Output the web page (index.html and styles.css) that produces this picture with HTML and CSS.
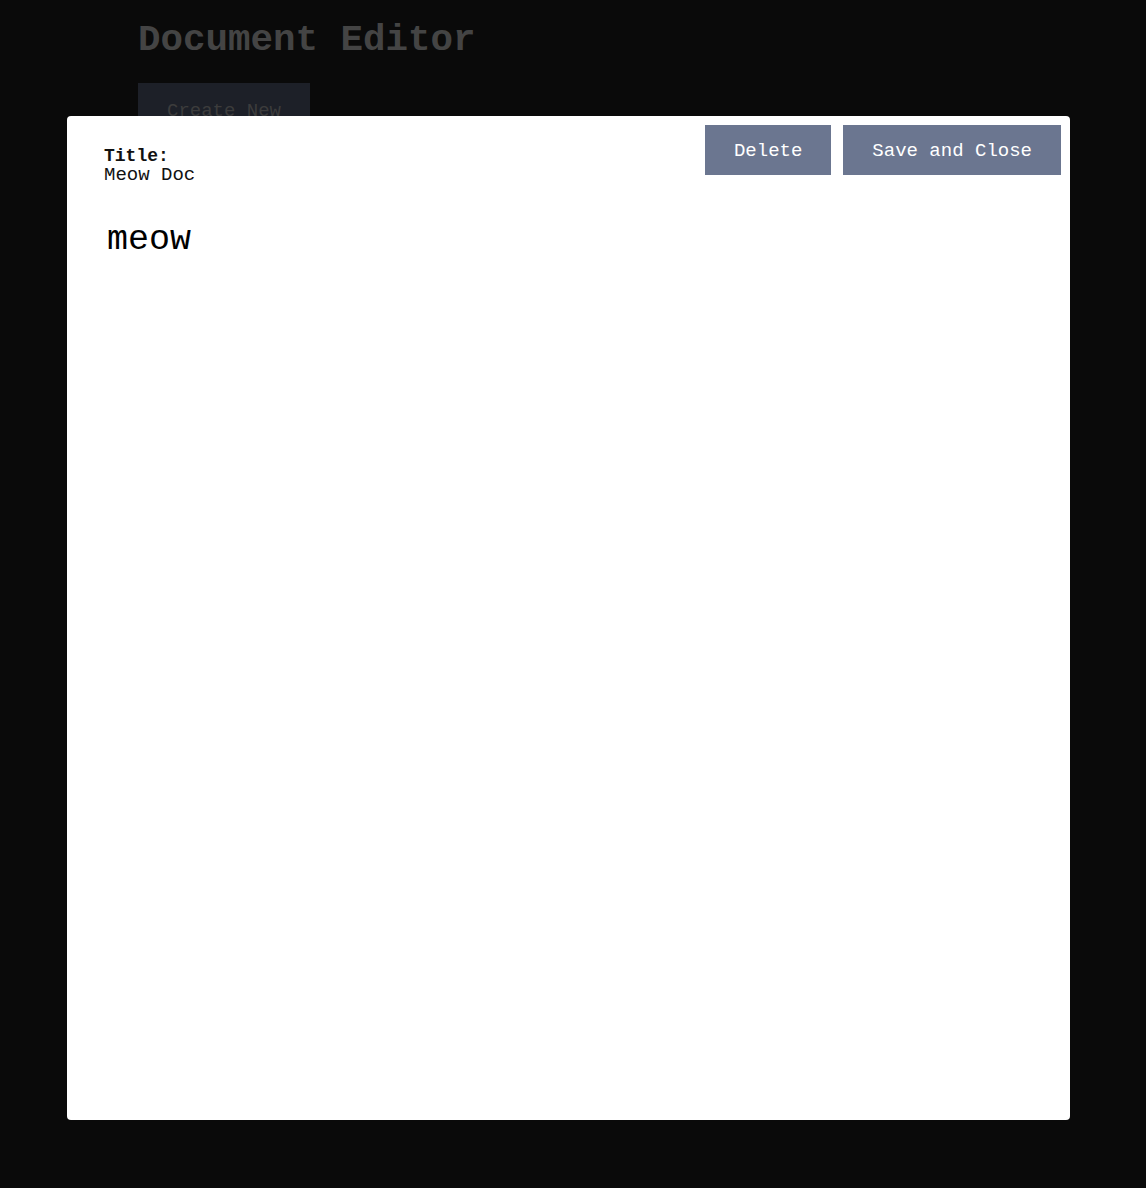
FILE: index.html
```html
<!DOCTYPE html>
<html>
<head>
<meta charset="utf-8">
<link rel="stylesheet" href="styles.css">
</head>
<body>
<div class="page">
  <h1 class="heading">Document Editor</h1>
  <button class="create-btn">Create New</button>
</div>
<div class="overlay">
  <div class="modal">
    <div class="modal-header">
      <div class="title-block">
        <div class="title-label">Title:</div>
        <div class="title-value">Meow Doc</div>
      </div>
      <div class="actions">
        <button class="btn">Delete</button>
        <button class="btn">Save and Close</button>
      </div>
    </div>
    <div class="doc-body">meow</div>
  </div>
</div>
</body>
</html>
```
FILE: styles.css
```css
html, body {
  margin: 0;
  padding: 0;
  background: #0a0a0a;
  height: 100%;
}
body {
  font-family: "Liberation Mono", "Courier New", monospace;
  overflow: hidden;
}
.page {
  padding: 18px 0 0 138px;
}
.heading {
  margin: 0;
  font-size: 37.5px;
  font-weight: bold;
  color: #444444;
  line-height: 44px;
}
.create-btn {
  margin-top: 21px;
  width: 172px;
  height: 52px;
  border: none;
  background: #1d2028;
  color: #3c3c3c;
  font-family: inherit;
  font-size: 19px;
  padding: 4px 0 0;
}
.overlay {
  position: fixed;
  inset: 0;
  display: flex;
  justify-content: flex-start;
  align-items: flex-start;
  padding: 116px 0 0 67px;
  box-sizing: border-box;
}
.modal {
  width: 1003px;
  height: 1004px;
  background: #ffffff;
  border-radius: 4px;
  box-sizing: border-box;
  padding: 9px 9px 0 37px;
}
.modal-header {
  display: flex;
  justify-content: space-between;
  align-items: flex-start;
}
.title-block {
  padding-top: 22px;
  font-size: 19px;
  line-height: 19px;
  color: #111;
}
.title-label {
  font-weight: bold;
  font-size: 18px;
}
.actions {
  display: flex;
  gap: 12px;
}
.btn {
  height: 50px;
  padding: 2px 29px 0;
  border: none;
  background: #6b7690;
  color: #ffffff;
  font-family: inherit;
  font-size: 19px;
  font-weight: normal;
}
.doc-body {
  margin-top: 35px;
  padding-left: 3px;
  font-size: 35px;
  color: #000;
}
```
